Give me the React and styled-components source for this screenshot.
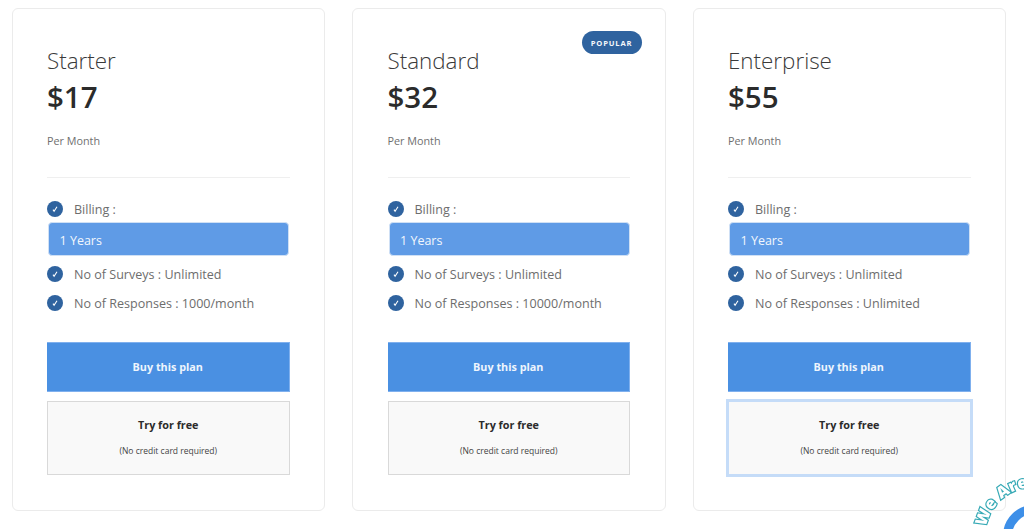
import React from 'react';
import styled, { createGlobalStyle } from 'styled-components';

const Global = createGlobalStyle`
  html, body { margin: 0; padding: 0; height: 100%; overflow: hidden; background: #fff; }
  body { font-family: "Open Sans", "Liberation Sans", sans-serif; }
  * { box-sizing: border-box; }
`;
const Page = styled.div`
  display: grid;
  grid-template-columns: repeat(3, 313.5px);
  column-gap: 27px;
  padding: 8px 0 0 11.5px;
  width: 1024px;
  height: 529px;
  overflow: hidden;
`;
const Card = styled.section`
  position: relative;
  height: 503px;
  padding: 37px 34.5px 0;
  border: 1px solid #ebebeb;
  border-radius: 6px;
  background: #fff;
`;
const Badge = styled.span`
  position: absolute;
  top: 22px;
  right: 23px;
  width: 60px;
  height: 23px;
  border-radius: 12px;
  background: #2f639f;
  color: #f4f7fb;
  font-size: 7.6px;
  font-weight: 700;
  letter-spacing: 0.8px;
  display: flex;
  align-items: center;
  justify-content: center;
`;
const Name = styled.h3`
  margin: 0;
  font-size: 22.4px;
  line-height: 30px;
  font-weight: 300;
  color: #3a3a3a;
`;
const Price = styled.div`
  margin-top: 1px;
  font-size: 29.5px;
  line-height: 40px;
  font-weight: 600;
  color: #2b2b2b;
`;
const Period = styled.div`
  margin-top: 16px;
  font-size: 10.8px;
  line-height: 16px;
  color: #6f6f6f;
`;
const Divider = styled.hr`
  margin: 28px 0 0;
  border: 0;
  border-top: 1px solid #efefef;
`;
const Features = styled.ul`
  list-style: none;
  margin: 22px 0 0;
  padding: 0;
`;
const Feature = styled.li`
  display: flex;
  align-items: center;
  gap: 11px;
  height: 18px;
  margin-top: ${p => p.$gap || 0}px;
  font-size: 12.55px;
  color: #6d6d6d;
`;
const Check = styled.span`
  width: 16px;
  height: 16px;
  border-radius: 50%;
  background: #2f639f;
  display: flex;
  align-items: center;
  justify-content: center;
  flex: none;
`;
const Select = styled.div`
  margin: 4px 0.5px 0 1px;
  height: 34px;
  padding: 2px 0 0 10.5px;
  display: flex;
  align-items: center;
  border: 1px solid #cfe0f5;
  border-radius: 4px;
  background: #5f9be6;
  color: #f2f7fd;
  font-size: 12.5px;
`;
const Buy = styled.button`
  display: block;
  width: 100%;
  height: 50px;
  margin-top: 30px;
  padding: 0 0 2px;
  border: 1px solid #7fb0ee;
  border-width: 1px 1px 1px 0;
  background: #4a90e2;
  color: #eef5fd;
  font: 700 10.8px "Open Sans", sans-serif;
`;
const Trial = styled.button`
  display: flex;
  flex-direction: column;
  align-items: center;
  width: 100%;
  height: 74px;
  margin-top: 9px;
  padding: 15px 0 0;
  background: #f9f9f9;
  border: 1px solid #d9d9d9;
  outline: ${p => (p.$focus ? '3px solid #c5dcf8' : 'none')};
  outline-offset: -1px;
  font-family: "Open Sans", sans-serif;
  color: #2b2b2b;
`;
const TrialTitle = styled.span`
  font-size: 10.8px;
  line-height: 16px;
  font-weight: 700;
`;
const TrialNote = styled.span`
  margin-top: 12px;
  font-size: 8.5px;
  line-height: 12px;
  color: #444;
`;
const Widget = styled.svg`
  position: fixed;
  right: 0;
  bottom: 0;
  width: 60px;
  height: 60px;
`;

const Tick = () => (
  <svg width="8" height="8" viewBox="0 0 8 8" fill="none">
    <path d="M2 4.6 3.1 6.2 6 1.8" stroke="#fff" strokeWidth="1.1" />
  </svg>
);

const plans = [
  { name: 'Starter', price: '$17', responses: '1000/month' },
  { name: 'Standard', price: '$32', responses: '10000/month', popular: true },
  { name: 'Enterprise', price: '$55', responses: 'Unlimited', focus: true },
];

export default function App() {
  return (
    <>
      <Global />
      <Page>
        {plans.map(p => (
          <Card key={p.name}>
            {p.popular && <Badge>POPULAR</Badge>}
            <Name>{p.name}</Name>
            <Price>{p.price}</Price>
            <Period>Per Month</Period>
            <Divider />
            <Features>
              <Feature><Check><Tick /></Check>Billing :</Feature>
              <Select>1 Years</Select>
              <Feature $gap={9}><Check><Tick /></Check>No of Surveys : Unlimited</Feature>
              <Feature $gap={11}><Check><Tick /></Check>No of Responses : {p.responses}</Feature>
            </Features>
            <Buy>Buy this plan</Buy>
            <Trial $focus={p.focus}>
              <TrialTitle>Try for free</TrialTitle>
              <TrialNote>(No credit card required)</TrialNote>
            </Trial>
          </Card>
        ))}
      </Page>
      <Widget viewBox="0 0 60 60">
        <defs>
          <path id="arc" d="M22 58 A 49 49 0 0 1 70 18" />
        </defs>
        <circle cx="70" cy="67" r="26.5" fill="none" stroke="#3d8fe8" strokeWidth="9" />
        <text fontFamily="'Open Sans', sans-serif" fontWeight="800" fontSize="16" fill="#fff" stroke="#35a9b5" strokeWidth="2.4" paintOrder="stroke" letterSpacing="0.4">
          <textPath href="#arc">We Are</textPath>
        </text>
      </Widget>
    </>
  );
}
